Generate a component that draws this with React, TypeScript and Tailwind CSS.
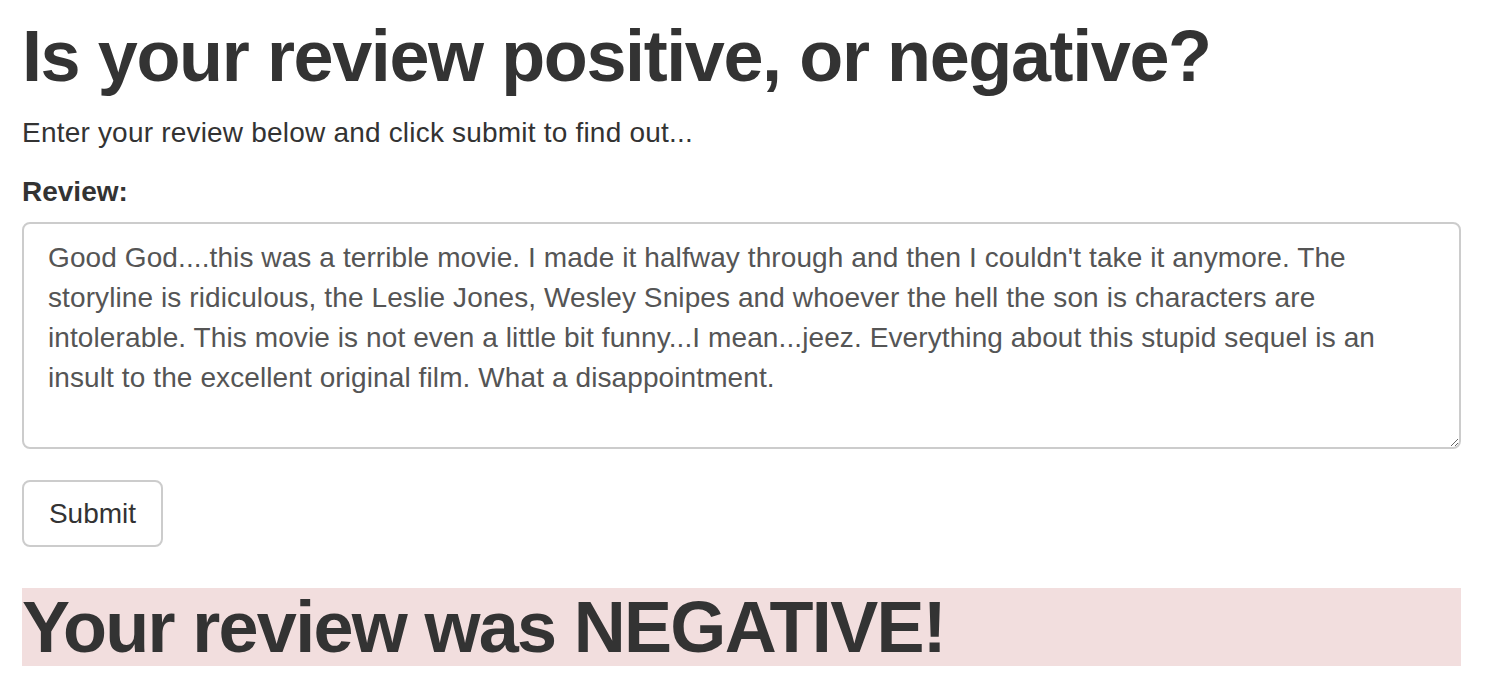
import { useState } from 'react'

const REVIEW =
  "Good God....this was a terrible movie. I made it halfway through and then I couldn't take it anymore. The storyline is ridiculous, the Leslie Jones, Wesley Snipes and whoever the hell the son is characters are intolerable. This movie is not even a little bit funny...I mean...jeez. Everything about this stupid sequel is an insult to the excellent original film. What a disappointment."

export default function App() {
  const [review, setReview] = useState(REVIEW)

  return (
    <div className="min-h-screen bg-white text-[#333] font-['Liberation_Sans',Arial,sans-serif]">
      <div className="px-[22px] pr-[41px]">
        <h1 className="pt-[17px] text-[72px] leading-[1.1] font-bold tracking-[-1.4px]">
          Is your review positive, or negative?
        </h1>
        <p className="mt-[17px] text-[28px] leading-[40px] tracking-[0.2px]">
          Enter your review below and click submit to find out...
        </p>

        <form className="mt-[19px]" onSubmit={(e) => e.preventDefault()}>
          <label htmlFor="review" className="block text-[28px] leading-[40px] font-bold">
            Review:
          </label>
          <textarea
            id="review"
            rows={5}
            value={review}
            onChange={(e) => setReview(e.target.value)}
            className="mt-[10px] block w-full h-[227px] rounded-[8px] border-2 border-[#ccc] px-[24px] pt-[14px] pb-[10px] text-[28px] leading-[40px] tracking-[0.1px] text-[#555] outline-none"
          />
          <button
            type="submit"
            className="mt-[31px] h-[67px] w-[141px] rounded-[8px] border-2 border-[#ccc] bg-white text-[28px] text-[#333]"
          >
            Submit
          </button>
        </form>

        <h1 className="mt-[41px] bg-[#f2dede] text-[72px] leading-[78px] font-bold tracking-[-1.7px]">
          Your review was NEGATIVE!
        </h1>
      </div>
    </div>
  )
}
